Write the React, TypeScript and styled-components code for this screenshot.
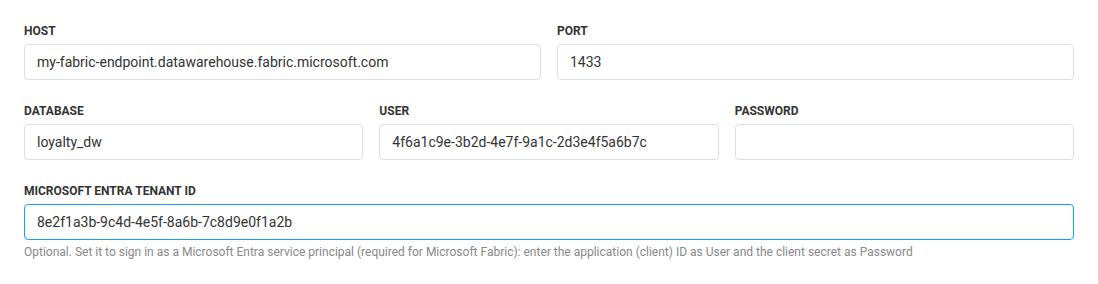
import styled, { createGlobalStyle } from 'styled-components';

const GlobalStyle = createGlobalStyle`
	body {
		margin: 0;
		background: #ffffff;
		font-family: Roboto, 'Liberation Sans', sans-serif;
	}
`;

const Form = styled.div`
	padding: 23px 24px 0 24px;
	width: 1050px;
	display: flex;
	flex-direction: column;
	gap: 23px;
`;

const Row = styled.div<{ $cols: number }>`
	display: grid;
	grid-template-columns: repeat(${(p) => p.$cols}, 1fr);
	gap: 16px;
`;

const Field = styled.label`
	display: flex;
	flex-direction: column;
	min-width: 0;
`;

const Label = styled.span`
	font-size: 12px;
	line-height: 16px;
	font-weight: 700;
	text-transform: uppercase;
	color: #333333;
	margin-bottom: 5px;
`;

const Input = styled.input<{ $focused?: boolean }>`
	box-sizing: border-box;
	height: 36px;
	width: 100%;
	padding: 0 12px;
	font-family: Roboto, 'Liberation Sans', sans-serif;
	font-size: 14px;
	color: #333333;
	background: #ffffff;
	border: 1px solid ${(p) => (p.$focused ? '#1a9ff0' : '#dadee4')};
	border-radius: 4px;
	outline: none;
`;

const Help = styled.span`
	margin-top: 4px;
	font-size: 12px;
	line-height: 16px;
	color: #888888;
`;

type FieldProps = {
	label: string;
	value: string;
	focused?: boolean;
	help?: string;
};

const TextField = ({ label, value, focused, help }: FieldProps) => (
	<Field>
		<Label>{label}</Label>
		<Input $focused={focused} defaultValue={value} />
		{help && <Help>{help}</Help>}
	</Field>
);

export default function App() {
	return (
		<>
			<GlobalStyle />
			<Form>
				<Row $cols={2}>
					<TextField label='Host' value='my-fabric-endpoint.datawarehouse.fabric.microsoft.com' />
					<TextField label='Port' value='1433' />
				</Row>
				<Row $cols={3}>
					<TextField label='Database' value='loyalty_dw' />
					<TextField label='User' value='4f6a1c9e-3b2d-4e7f-9a1c-2d3e4f5a6b7c' />
					<TextField label='Password' value='' />
				</Row>
				<Row $cols={1}>
					<TextField
						label='Microsoft Entra Tenant ID'
						value='8e2f1a3b-9c4d-4e5f-8a6b-7c8d9e0f1a2b'
						focused
						help='Optional. Set it to sign in as a Microsoft Entra service principal (required for Microsoft Fabric): enter the application (client) ID as User and the client secret as Password'
					/>
				</Row>
			</Form>
		</>
	);
}
